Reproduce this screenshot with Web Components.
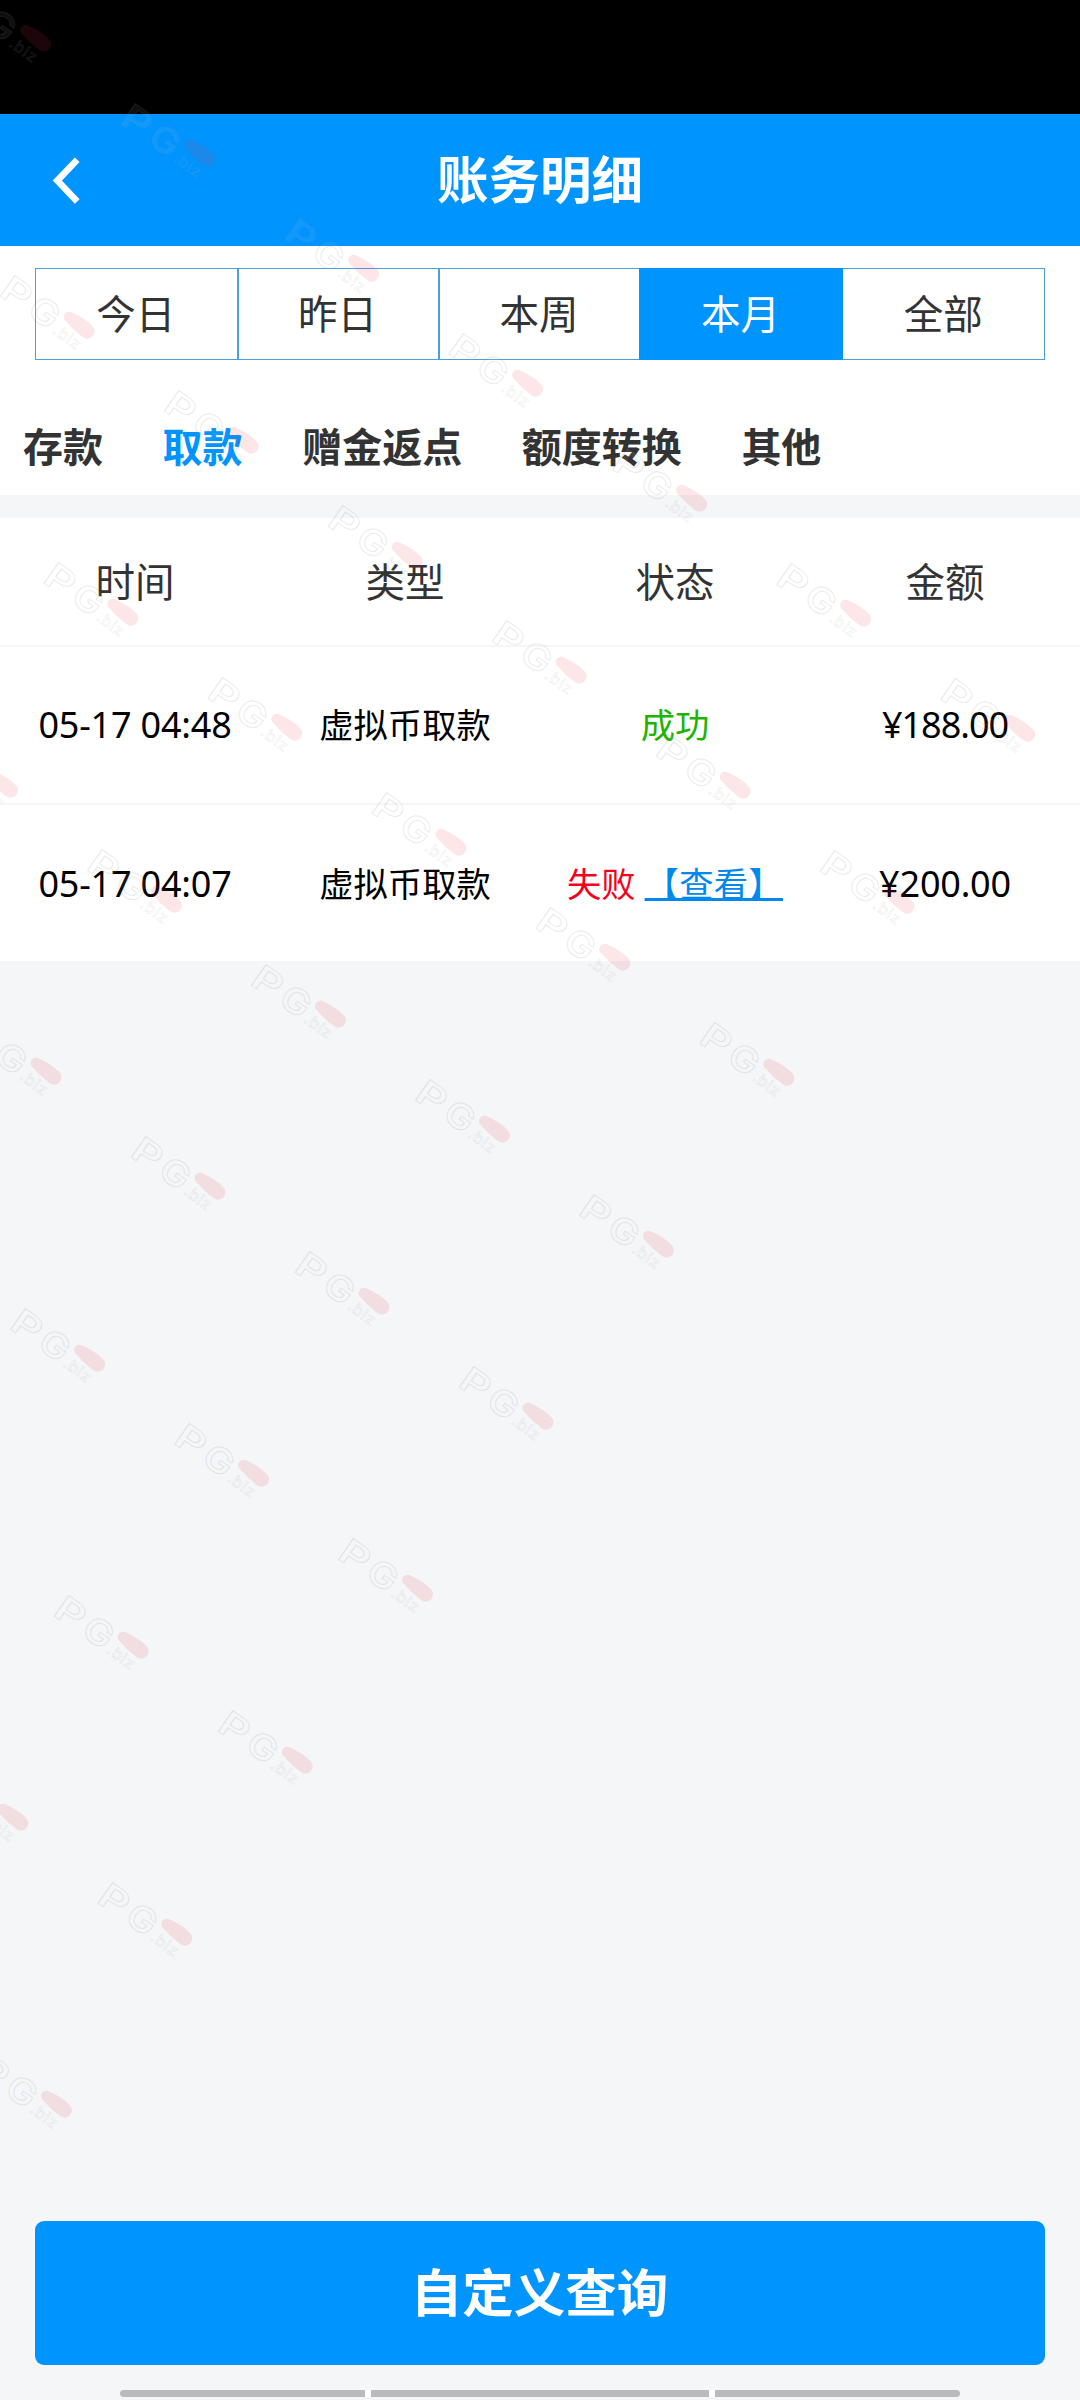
<!DOCTYPE html>
<html lang="zh-CN">
<head>
<meta charset="utf-8">
<title>账务明细</title>
<style>
html, body { margin: 0; padding: 0; }
body { width: 1080px; height: 2400px; overflow: hidden; background: #f4f6f8; font-family: "Noto Sans CJK SC", sans-serif; color: #333; }
</style>
</head>
<body>
<ledger-page>
  <page-header>账务明细</page-header>
  <period-tabs>
    <period-tab>今日</period-tab>
    <period-tab>昨日</period-tab>
    <period-tab>本周</period-tab>
    <period-tab active>本月</period-tab>
    <period-tab>全部</period-tab>
  </period-tabs>
  <category-bar>
    <category-item>存款</category-item>
    <category-item active>取款</category-item>
    <category-item>赠金返点</category-item>
    <category-item>额度转换</category-item>
    <category-item>其他</category-item>
  </category-bar>
  <record-list>
    <record-row heading><span>时间</span><span>类型</span><span>状态</span><span>金额</span></record-row>
    <record-row>
      <num-text>05-17 04:48</num-text><span>虚拟币取款</span><status-text kind="ok">成功</status-text><num-text style="--track:-1px">¥188.00</num-text>
    </record-row>
    <record-row>
      <num-text>05-17 04:07</num-text><span>虚拟币取款</span><status-text kind="fail" link="【查看】">失败</status-text><num-text>¥200.00</num-text>
    </record-row>
  </record-list>
  <query-button slot="footer">自定义查询</query-button>
  <gesture-bar slot="footer"></gesture-bar>
</ledger-page>
<script>
const define = (name, html, setup) => customElements.define(name, class extends HTMLElement {
  constructor() {
    super();
    const root = this.attachShadow({ mode: 'open' });
    const template = document.createElement('template');
    template.innerHTML = html;
    root.append(template.content.cloneNode(true));
    if (setup) setup(this, root);
  }
});

define('ledger-page', `
<style>
:host { display: flex; flex-direction: column; width: 1080px; height: 2400px; position: relative; overflow: hidden; }
.status { height: 114px; background: #000; flex: none; }
main { flex: 1; }
brand-marks { position: absolute; inset: 0; pointer-events: none; }
</style>
<div class="status"></div>
<main><slot></slot></main>
<footer><slot name="footer"></slot></footer>
<brand-marks></brand-marks>`);

define('page-header', `
<style>
:host { display: grid; grid-template-columns: 132px 1fr 132px; align-items: center; height: 132px; background: #0094ff; color: #fff; }
svg { display: block; margin-left: 50px; }
h1 { margin: 0; padding-bottom: 7px; text-align: center; font-size: 51.5px; line-height: 74px; font-weight: 700; }
</style>
<svg width="32" height="48" viewBox="0 0 32 48" fill="none" stroke="#fff" stroke-width="6.6"><path d="M27.2 3.7 7.3 24.6 27.2 45.6"/></svg>
<h1><slot></slot></h1>`);

define('period-tabs', `
<style>
:host { display: flex; padding: 22px 35px 0; height: 114px; box-sizing: border-box; background: #fff; }
div { display: grid; grid-template-columns: repeat(5, 1fr); flex: 1; border: 1px solid #4a9fe3; box-sizing: border-box; }
</style>
<div><slot></slot></div>`);

define('period-tab', `
<style>
:host { display: flex; align-items: center; justify-content: center; font-size: 39.5px; line-height: 56px; padding: 0 3px 5px 0; border-left: 2px solid #4a9fe3; margin-left: -1px; box-sizing: border-box; }
:host(:first-child) { border-left: 0; margin-left: 0; padding-right: 2px; }
:host([active]) { background: #0094ff; color: #fff; border-color: #0094ff; outline: 1px solid #0094ff; }
:host(:last-child) { border-left: 0; margin-left: 0; padding-right: 0; }
</style>
<slot></slot>`);

define('category-bar', `
<style>
:host { display: flex; gap: 59.6px; align-items: center; height: 135px; padding: 34px 23px 0; box-sizing: border-box; background: #fff; }
</style>
<slot></slot>`);

define('category-item', `
<style>
:host { display: block; font-size: 40px; line-height: 58px; font-weight: 700; }
:host([active]) { color: #0094ff; }
</style>
<slot></slot>`);

define('record-list', `
<style>
:host { display: block; margin-top: 23px; background: #fff; }
</style>
<slot></slot>`);

define('record-row', `
<style>
:host { display: grid; grid-template-columns: repeat(4, 1fr); align-items: center; justify-items: center; height: 158px; box-sizing: border-box; border-bottom: 2px solid #f5f6f7; font-size: 34.3px; line-height: 50px; color: #000; padding-bottom: 4px; }
:host([heading]) { height: 129px; font-size: 39.5px; line-height: 56px; color: #333; padding-bottom: 4px; }
:host(:last-child) { border-bottom: 0; height: 156px; padding-bottom: 2px; }
</style>
<slot></slot>`);

define('num-text', `
<style>
:host { display: block; font-family: "Noto Sans", "Noto Sans CJK SC", sans-serif; font-size: 36px; line-height: 50px; letter-spacing: var(--track, -.2px); white-space: nowrap; padding-top: 3px; }
</style>
<slot></slot>`);

define('status-text', `
<style>
:host { display: flex; gap: 9px; white-space: nowrap; color: #20b400; }
:host([kind="fail"]) { color: #f5001d; }
a { color: #0088ee; text-decoration: underline; text-decoration-thickness: 3px; text-underline-offset: 1px; text-decoration-skip-ink: none; letter-spacing: .3px; }
a:empty { display: none; }
:host([kind="ok"]) { gap: 0; }
</style>
<span><slot></slot></span><a></a>`, (host, root) => {
  root.querySelector('a').textContent = host.getAttribute('link') || '';
});

define('query-button', `
<style>
:host { display: block; padding: 0 35px; }
button { display: block; width: 100%; height: 144px; border: 0; border-radius: 9px; background: #0094ff; color: #fff; font: 700 51.5px/74px "Noto Sans CJK SC", sans-serif; padding: 0 1px 6px 0; }
</style>
<button><slot></slot></button>`);

define('gesture-bar', `
<style>
:host { display: flex; justify-content: center; height: 7px; padding: 25px 0 3px; }
div { display: flex; gap: 6px; width: 840px; background: #fff; border-radius: 4px; overflow: hidden; }
i { flex: 245; background: #b9bbbe; }
i:nth-child(2) { flex: 338; }
</style>
<div><i></i><i></i><i></i></div>`);

define('brand-marks', `
<style>
:host { display: block; }
svg { display: block; }
text { font-family: Inter, sans-serif; font-weight: 600; fill: #fff; fill-opacity: .06; stroke: #85898d; stroke-opacity: .18; }
.big { font-size: 35px; stroke-width: 1px; }
.small { font-size: 16px; font-weight: 500; stroke-width: .6px; letter-spacing: .8px; }
.pill { fill: #e8303c; fill-opacity: .12; }
</style>
<svg width="1080" height="2400" viewBox="0 0 1080 2400"></svg>`, (host, root) => {
  const mark = (x, y) => `<g transform="translate(${x} ${y})">
<g transform="translate(-81 -30) rotate(35)"><text class="big" transform="scale(1.3 1)">P</text><text class="big" transform="translate(34 0) scale(1.12 1)">G</text></g>
<g transform="translate(-27 8) rotate(36)"><text class="small">.biz</text></g>
<path class="pill" transform="rotate(38)" d="M-12-5.4Q0-8.6 11-7.4A7.2 7.2 0 0 1 11 7.4Q0 8-12 5.4A5.4 5.4 0 0 1-12-5.4Z"/></g>`;
  let out = '';
  for (let row = 0; row < 9; row++)
    for (let n = 0; n < 7; n++) {
      const x = 1019 - row * 120.4 - n * 164, y = 727.5 + row * 172 - n * 115;
      if (x > -20) out += mark(x, y);
    }
  root.querySelector('svg').innerHTML = out;
});
</script>
</body>
</html>
